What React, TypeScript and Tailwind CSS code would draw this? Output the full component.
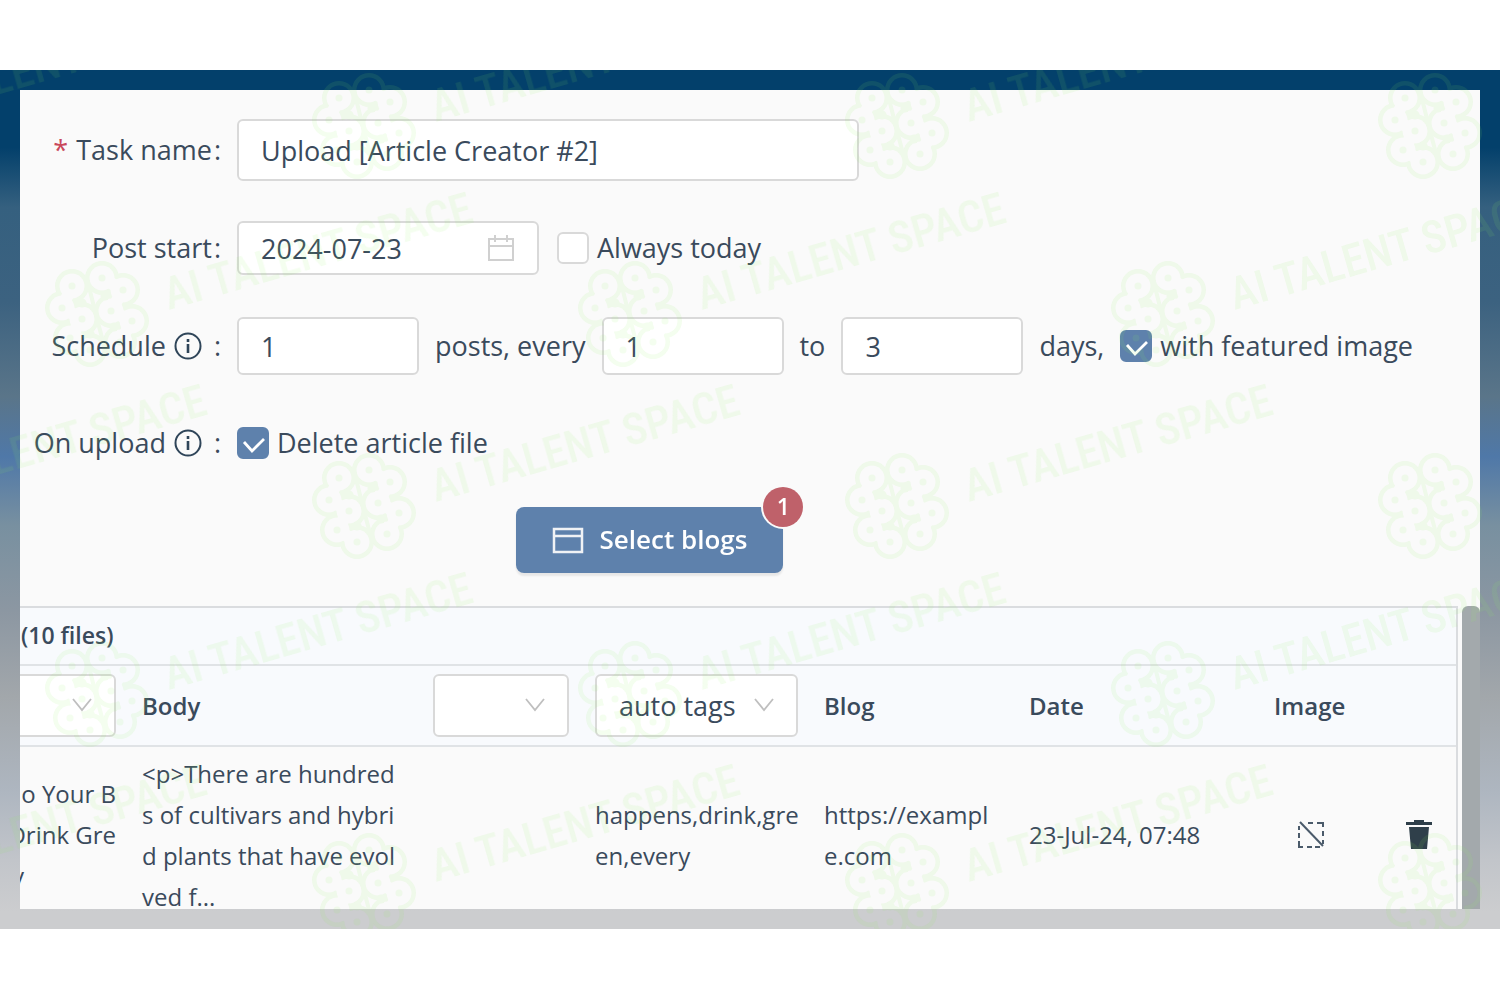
import React, { useId } from "react";

const FIELD = "rounded-md border-2 border-[#d9d9d9] bg-white text-[27px] text-[#3a4a5c] outline-none";

function InfoIcon() {
  return (
    <svg viewBox="0 0 28 28" className="mr-2.5 ml-2 size-7 shrink-0" fill="none" stroke="#2f4559" strokeWidth="2" aria-hidden="true">
      <circle cx="14" cy="14" r="12.5" />
      <path d="M14 12v9M14 7v3" strokeWidth="2.6" />
    </svg>
  );
}

function Label({ htmlFor, required, info, children }: { htmlFor: string; required?: boolean; info?: boolean; children: React.ReactNode }) {
  return (
    <label htmlFor={htmlFor} className="flex w-[201px] shrink-0 items-center justify-end whitespace-nowrap">
      {required && <span className="mr-2 text-[#c9485b]">*</span>}
      {children}
      {info && <InfoIcon />}
      <span className="ml-0.5">:</span>
    </label>
  );
}

function Check({ label, checked }: { label: string; checked?: boolean }) {
  const id = useId();
  return (
    <span className="flex items-center gap-2 whitespace-nowrap">
      <span className="relative flex size-8">
        <input
          id={id}
          type="checkbox"
          defaultChecked={checked}
          className="peer size-8 appearance-none rounded-md border-2 border-[#d9d9d9] bg-white checked:border-[#5e81ac] checked:bg-[#5e81ac]"
        />
        <svg viewBox="0 0 32 32" className="pointer-events-none absolute inset-0 hidden size-8 peer-checked:block" fill="none" stroke="#fff" strokeWidth="2.8" aria-hidden="true">
          <path d="M7 15l8 9L27 12" />
        </svg>
      </span>
      <label htmlFor={id}>{label}</label>
    </span>
  );
}

function Chooser({ label, options }: { label: string; options: string[] }) {
  return (
    <span className="relative block">
      <select aria-label={label} className={`${FIELD} block h-[63px] w-full appearance-none px-[22px] font-normal`}>
        {options.map((o) => (
          <option key={o}>{o}</option>
        ))}
      </select>
      <svg viewBox="0 0 20 14" className="pointer-events-none absolute top-6 right-6 h-[14px] w-5" fill="none" stroke="#bfbfbf" strokeWidth="1.8" aria-hidden="true">
        <path d="M1 1l9 11 9-11" />
      </svg>
    </span>
  );
}

const LOBES = [
  [-26, -29], [-36, -7], [-16, 4], [-28, 23], [-8, 35],
  [4, -37], [25, -25], [13, -4], [34, 6], [22, 27],
];

const JOINTS = [[-16, -12], [-8, 19], [7, -19], [16, 12]];

function Watermark() {
  return (
    <svg className="pointer-events-none absolute inset-0 size-full" aria-hidden="true">
      <defs>
        <mask id="lobes" maskUnits="userSpaceOnUse" x="-60" y="-60" width="120" height="120">
          {LOBES.map(([x, y]) => <circle key={`o${x}`} cx={x} cy={y} r="17" fill="#fff" />)}
          {LOBES.map(([x, y]) => <circle key={`i${x}`} cx={x} cy={y} r="12.5" fill="#000" />)}
          <path d="M-26 -29L-36 -7L-16 4L-28 23L-8 35M4 -37L25 -25L13 -4L34 6L22 27" stroke="#000" strokeWidth="12" fill="none" />
          {LOBES.map(([x, y]) => <circle key={`d${x}`} cx={x} cy={y} r="3.5" fill="#fff" />)}
          {JOINTS.map(([x, y]) => <circle key={`j${x}`} cx={x} cy={y} r="4.5" fill="#fff" />)}
          <path d="M-11 -36L-2 0L7 34" stroke="#fff" strokeWidth="4" fill="none" />
        </mask>
        <g id="mark">
          <circle r="58" fill="#8cf05a" mask="url(#lobes)" />
          <text transform="translate(224 -49) rotate(-16)" textAnchor="middle" fill="#8cf05a" fontSize="45" fontWeight="500" fontFamily="'Liberation Sans Narrow', 'Roboto Condensed', 'DejaVu Sans Condensed', sans-serif">
            AI TALENT SPACE
          </text>
        </g>
      </defs>
      <g opacity="0.1">
        {[57, 437, 817].flatMap((y) => [-168, 365, 898, 1431].map((x) => <use key={`${x}-${y}`} href="#mark" x={x} y={y} />))}
        {[245, 625, 1005].flatMap((y) => [-435, 98, 631, 1164].map((x) => <use key={`${x}-${y}`} href="#mark" x={x} y={y} />))}
      </g>
    </svg>
  );
}

const HEAD = "px-[13px] py-2 text-left align-middle";
const CELL = "px-[13px] py-1.5 text-left align-middle";

export default function App() {
  return (
    <div className="min-h-screen bg-white pt-[70px] font-['Open_Sans','Noto_Sans',sans-serif] text-[27px] text-[#3a4a5c]">
      <main className="relative overflow-hidden bg-[linear-gradient(#03406b_0%,#03406b_9%,#35607f_16%,#3c6280_27%,#5a7589_38%,#4f78a8_45%,#7890a0_53%,#8c97a2_63%,#a2a7ab_73%,#aeb6c0_84%,#c2c5ca_92%,#cccdcf_98%)] p-5">
        <section className="overflow-hidden bg-[#fafafa] pt-[29px]">
          <form onSubmit={(e) => e.preventDefault()}>
            <div className="flex items-center gap-4">
              <Label htmlFor="task" required>Task name</Label>
              <input id="task" defaultValue="Upload [Article Creator #2]" className={`${FIELD} h-[62px] w-[622px] px-[22px]`} />
            </div>
            <div className="mt-10 flex items-center gap-4">
              <Label htmlFor="start">Post start</Label>
              <div className="flex items-center gap-[18px]">
                <span className="relative flex">
                  <input id="start" defaultValue="2024-07-23" className={`${FIELD} h-[54px] w-[302px] px-[22px]`} />
                  <svg viewBox="0 0 28 28" className="pointer-events-none absolute top-[13px] right-6 size-7" fill="none" stroke="#d0d0d0" strokeWidth="2" aria-hidden="true">
                    <path d="M2 5h24v21H2zM2 12h24M8 1v7M20 1v7" />
                  </svg>
                </span>
                <Check label="Always today" />
              </div>
            </div>
            <div className="mt-[42px] flex items-center gap-4">
              <Label htmlFor="posts" info>Schedule</Label>
              <div className="flex items-center gap-4 whitespace-nowrap">
                <input id="posts" defaultValue="1" className={`${FIELD} h-[58px] w-[182px] px-[22px]`} />
                <label htmlFor="min">posts, every</label>
                <input id="min" defaultValue="1" className={`${FIELD} h-[58px] w-[182px] px-[22px]`} />
                <label htmlFor="max">to</label>
                <input id="max" defaultValue="3" className={`${FIELD} h-[58px] w-[182px] px-[22px]`} />
                <span>days,</span>
                <Check label="with featured image" checked />
              </div>
            </div>
            <div className="mt-12 flex items-center gap-4">
              <Label htmlFor="upload" info>On upload</Label>
              <Check label="Delete article file" checked />
            </div>
            <div className="mt-[43px] mr-[201px] mb-[33px] flex justify-center">
              <button type="button" className="relative z-10 flex h-[66px] items-center gap-4 rounded-lg bg-[#5e81ac] px-9 text-[26px] font-semibold text-white shadow-[0_3px_2px_rgba(0,0,0,0.08)]">
                <svg viewBox="0 0 32 28" className="h-7 w-8" fill="none" stroke="#f0f2f5" strokeWidth="2.5" aria-hidden="true">
                  <path d="M2 3h28v23H2zM2 10h28" />
                </svg>
                Select blogs
                <span className="absolute -top-5 -right-5 flex size-10 items-center justify-center rounded-full bg-[#bf616a] text-[23px] ring-2 ring-[#fafafa]">1</span>
              </button>
            </div>
          </form>
          <div className="flex gap-1">
            <div className="max-h-[303px] min-w-0 grow overflow-hidden border-t-2 border-r-2 border-[#dadcdf]">
              <h2 className="flex h-[58px] items-center border-b-2 border-[#e0e3e6] bg-[#f8fafd] pl-px text-[23px] font-semibold">(10 files)</h2>
              <table className="-ml-[31px] w-[calc(100%+31px)] table-fixed border-collapse text-[24px] leading-[41px]">
                <colgroup>
                  <col className="w-[140px]" /><col className="w-[291px]" /><col className="w-[162px]" /><col className="w-[229px]" />
                  <col className="w-[205px]" /><col className="w-[245px]" /><col className="w-[106px]" /><col />
                </colgroup>
                <thead className="border-b-2 border-[#e0e3e6] bg-[#f8fafd]">
                  <tr className="*:font-semibold">
                    <th className={HEAD}><Chooser label="Title field" options={[""]} /></th>
                    <th className={HEAD}>Body</th>
                    <th className={HEAD}><Chooser label="Category" options={[""]} /></th>
                    <th className={HEAD}><Chooser label="Tags" options={["auto tags"]} /></th>
                    <th className={HEAD}>Blog</th>
                    <th className={HEAD}>Date</th>
                    <th className={HEAD}>Image</th>
                    <th className={HEAD} aria-label="Actions" />
                  </tr>
                </thead>
                <tbody>
                  <tr>
                    <td className={`${CELL} whitespace-nowrap`}>
                      <span className="block text-right">o Your B</span>
                      <span className="block text-right">Drink Gre</span>
                      <span className="block pl-2.5">y</span>
                    </td>
                    <td className={`${CELL} whitespace-nowrap`}>&lt;p&gt;There are hundred<br />s of cultivars and hybri<br />d plants that have evol<br />ved f...</td>
                    <td className={CELL} />
                    <td className={`${CELL} whitespace-nowrap`}>happens,drink,gre<br />en,every</td>
                    <td className={`${CELL} whitespace-nowrap`}>https://exampl<br />e.com</td>
                    <td className={`${CELL} whitespace-nowrap`}>23-Jul-24, 07:48</td>
                    <td className={CELL}>
                      <svg viewBox="0 0 28 28" className="ml-[23px] size-7" fill="none" stroke="#4a5a6a" strokeWidth="2" role="img" aria-label="No image">
                        <path d="M3 1l23 24" />
                        <path d="M11 2h5M20 2h6v4M26 10v5M26 19v4M2 5v4M2 12v5M2 20v6h4M10 26h5M18 26h5" />
                      </svg>
                    </td>
                    <td className={CELL}>
                      <button type="button" aria-label="Delete" className="ml-[26px] flex">
                        <svg viewBox="0 0 26 30" className="h-[30px] w-[26px]" fill="#2f3f4a" aria-hidden="true">
                          <path d="M8 0h10v2h8v3H0V2h8zM3 7h20l-2 22H5z" />
                        </svg>
                      </button>
                    </td>
                  </tr>
                </tbody>
              </table>
            </div>
            <div className="w-[18px] shrink-0 rounded-t-md bg-[#a3a9ac]" />
          </div>
        </section>
        <Watermark />
      </main>
    </div>
  );
}
